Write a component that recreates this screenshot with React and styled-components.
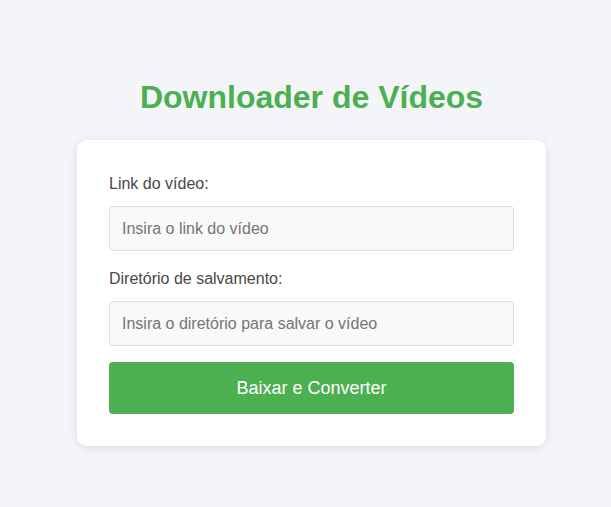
import React from 'react';
import styled, { createGlobalStyle } from 'styled-components';

const GlobalStyle = createGlobalStyle`
  * {
    box-sizing: border-box;
  }
  body {
    margin: 0;
    background-color: #f4f5f9;
    font-family: "Liberation Sans", Arial, sans-serif;
  }
`;

const Page = styled.div`
  display: flex;
  flex-direction: column;
  align-items: center;
  padding: 79px 0 40px 12px;
`;

const Title = styled.h1`
  color: #4caf50;
  margin: 0 0 24px;
  font: 700 32px/37px "Liberation Sans", Arial, sans-serif;
`;

const Card = styled.div`
  width: 469px;
  background-color: #fff;
  border-radius: 10px;
  box-shadow: 0 2px 10px rgba(0, 0, 0, 0.1);
  padding: 32px;
  display: flex;
  flex-direction: column;
`;

const Field = styled.div`
  display: flex;
  flex-direction: column;
  margin-bottom: 16px;
`;

const Label = styled.label`
  color: #484848;
  font: 400 16px/24px "Liberation Sans", Arial, sans-serif;
  margin-bottom: 10px;
`;

const Input = styled.input`
  width: 100%;
  padding: 12px;
  border: 1px solid #ddd;
  border-radius: 4px;
  background-color: #f9f9f9;
  color: #333;
  font: 400 16px/19px "Liberation Sans", Arial, sans-serif;
  outline: none;

  &::placeholder {
    color: #757575;
  }
`;

const Button = styled.button`
  width: 100%;
  padding: 15px;
  border: none;
  border-radius: 4px;
  background-color: #4caf50;
  color: #fff;
  cursor: pointer;
  font: 400 18px/22px "Liberation Sans", Arial, sans-serif;
`;

const App = () => {
  return (
    <>
      <GlobalStyle />
      <Page>
        <Title>Downloader de Vídeos</Title>
        <Card>
          <Field>
            <Label htmlFor="link">Link do vídeo:</Label>
            <Input id="link" type="text" placeholder="Insira o link do vídeo" />
          </Field>
          <Field>
            <Label htmlFor="dir">Diretório de salvamento:</Label>
            <Input id="dir" type="text" placeholder="Insira o diretório para salvar o vídeo" />
          </Field>
          <Button>Baixar e Converter</Button>
        </Card>
      </Page>
    </>
  );
};

export default App;
